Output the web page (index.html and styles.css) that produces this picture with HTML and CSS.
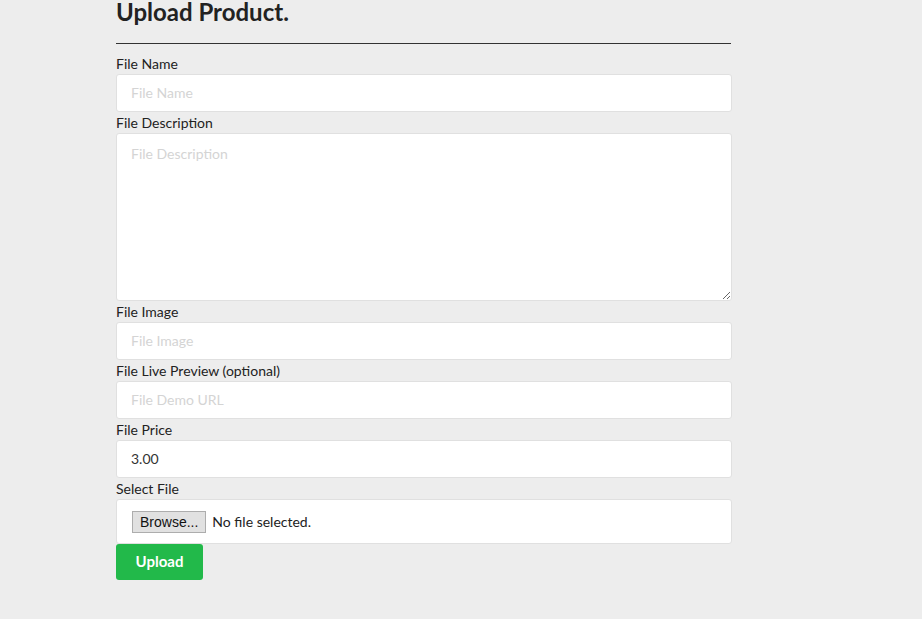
FILE: index.html
```html
<!DOCTYPE html>
<html>
<head>
<meta charset="utf-8">
<title>Upload Product</title>
<link rel="stylesheet" href="styles.css">
</head>
<body>
<main class="page">
  <h1 class="title">Upload Product.</h1>
  <hr class="rule">
  <form class="form">
    <label class="label">File Name</label>
    <input class="field" type="text" placeholder="File Name">
    <label class="label">File Description</label>
    <textarea class="field area" placeholder="File Description"></textarea>
    <label class="label">File Image</label>
    <input class="field" type="text" placeholder="File Image">
    <label class="label">File Live Preview (optional)</label>
    <input class="field" type="text" placeholder="File Demo URL">
    <label class="label">File Price</label>
    <input class="field" type="text" value="3.00">
    <label class="label">Select File</label>
    <div class="filebox">
      <span class="browse">Browse...</span>
      <span class="nofile">No file selected.</span>
    </div>
    <button class="upload" type="button">Upload</button>
  </form>
</main>
</body>
</html>
```

FILE: styles.css
```css
html, body {
  margin: 0;
  padding: 0;
  background: #ededed;
}
body {
  font-family: Lato, "Open Sans", sans-serif;
  color: #333;
  font-size: 14px;
}
.page {
  width: 616px;
  margin-left: 116px;
}
.title {
  margin: 0;
  font-size: 24px;
  line-height: 24px;
  font-weight: 700;
  color: #222;
}
.rule {
  margin: 19px 0 0;
  border: 0;
  border-top: 1px solid #333;
  width: 615px;
  height: 0;
}
.form {
  display: flex;
  flex-direction: column;
  padding-top: 9px;
}
.label {
  display: block;
  line-height: 20px;
  height: 20px;
  padding-top: 1px;
  color: #222;
}
.field {
  box-sizing: border-box;
  width: 616px;
  height: 38px;
  margin: 0;
  padding: 0 14px 2px;
  border: 1px solid #e0e0e0;
  border-radius: 3px;
  background: #fff;
  font-family: Lato, "Open Sans", sans-serif;
  font-size: 14px;
  color: #333;
  outline: none;
}
.field::placeholder {
  color: #d4d4d4;
}
.area {
  height: 168px;
  padding: 11px 14px;
  resize: vertical;
  display: block;
}
.filebox {
  box-sizing: border-box;
  width: 616px;
  height: 45px;
  border: 1px solid #e0e0e0;
  border-radius: 3px;
  background: #fff;
  display: flex;
  align-items: center;
  padding-left: 15px;
  gap: 6px;
}
.browse {
  box-sizing: border-box;
  height: 22px;
  padding: 0 7px;
  border: 1px solid #adadad;
  background: #e1e1e1;
  font-family: "Liberation Sans", Arial, sans-serif;
  font-size: 14px;
  line-height: 20px;
  color: #111;
}
.nofile {
  color: #222;
}
.upload {
  width: 87px;
  height: 36px;
  margin-top: 0;
  border: 0;
  border-radius: 3px;
  background: #22b94a;
  color: #fff;
  font-family: Lato, "Open Sans", sans-serif;
  font-weight: 700;
  font-size: 15px;
  padding: 0 0 2px;
}
```
